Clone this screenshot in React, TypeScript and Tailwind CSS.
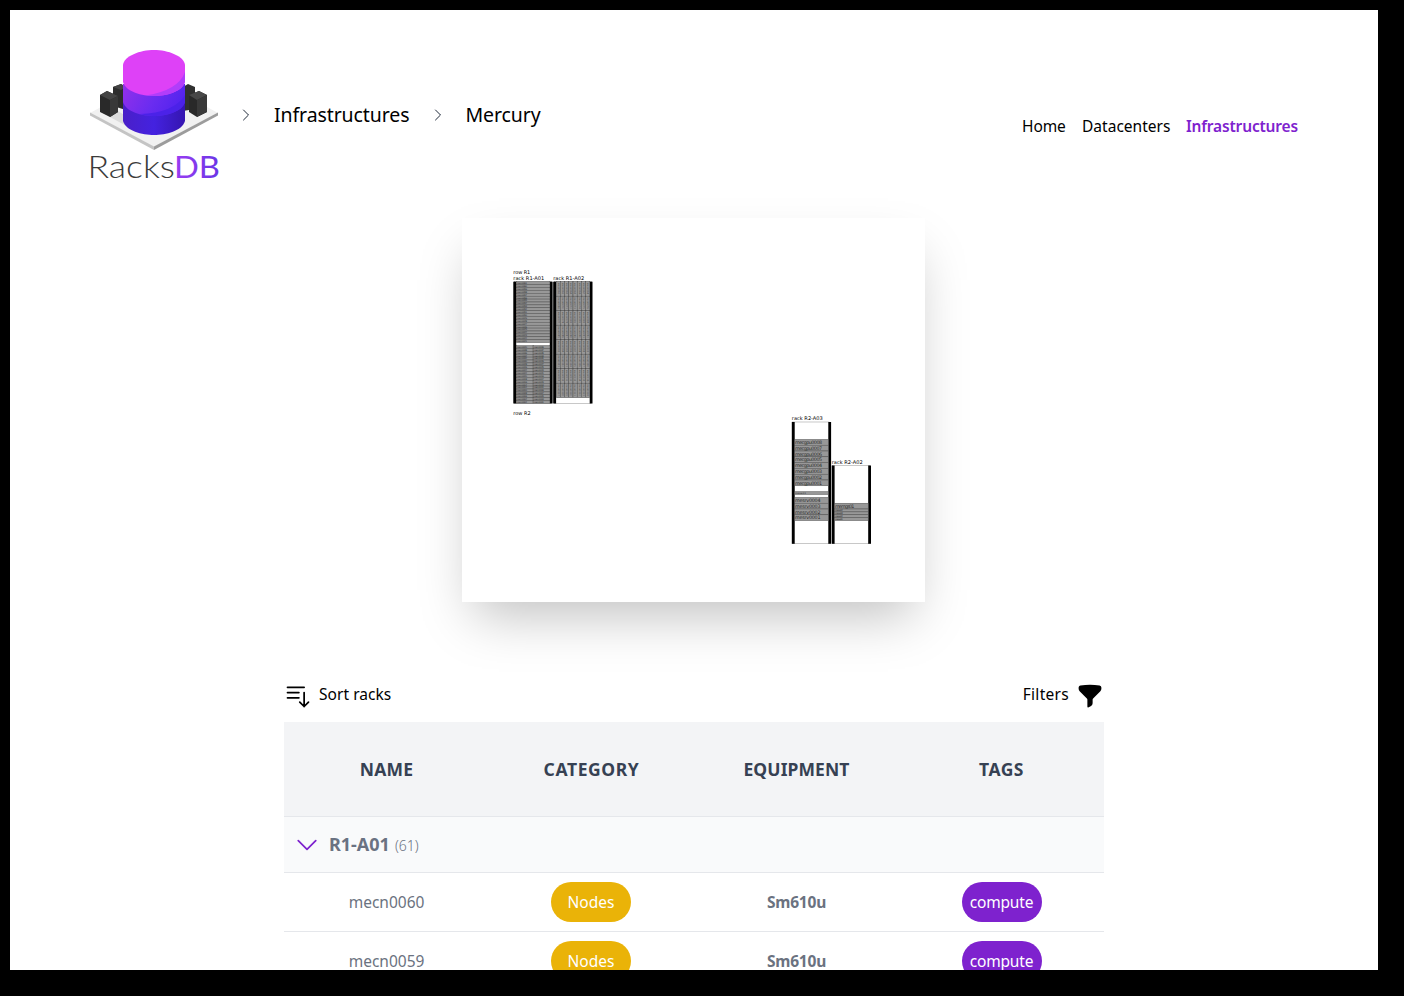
import React from "react";

const U = 2.9;

function Logo() {
  return (
    <svg viewBox="0 0 130 140" className="h-[140px] w-[130px] shrink-0 overflow-visible" role="img" aria-label="RacksDB">
      <defs>
        <linearGradient id="db" x1="0" y1="0" x2="1" y2="0">
          <stop offset="0" stopColor="#9a3df2" />
          <stop offset="1" stopColor="#6a35e6" />
        </linearGradient>
        <linearGradient id="mid" x1="0" y1="0" x2="1" y2="0.3">
          <stop offset="0" stopColor="#9330ea" />
          <stop offset="0.6" stopColor="#6a2cf0" />
          <stop offset="1" stopColor="#5524ee" />
        </linearGradient>
        <linearGradient id="low" x1="0" y1="0" x2="1" y2="0">
          <stop offset="0" stopColor="#4a1fc8" />
          <stop offset="0.5" stopColor="#4422e0" />
          <stop offset="1" stopColor="#3515b0" />
        </linearGradient>
      </defs>
      <path d="M0 63 64 28 128 63 64 97Z" fill="#f1f1f1" />
      <path d="M0 62.5 64 96.5V100L0 65.5Z" fill="#c4c4c4" />
      <path d="M128 62.5 64 96.5V100L128 65.5Z" fill="#9c9c9c" />
      <path d="M18 66 28 61 50 75 44 80Z" fill="#dcdcdc" />
      <path d="M23 37 31 34 36 37V60L23 56Z" fill="#2d2d2d" />
      <path d="M23 37 31 34 36 37 31 40Z" fill="#444" />
      <path d="M10 45 17 41 28 46V62L20 67 10 62Z" fill="#292929" />
      <path d="M10 45 17 41 28 46 20 50Z" fill="#444" />
      <path d="M20 50 28 46V62L20 67Z" fill="#383838" />
      <path d="M93 37 98 34 105 37V59L93 61Z" fill="#303030" />
      <path d="M99 45 109 41 117 45V62L107 67 99 62Z" fill="#292929" />
      <path d="M99 45 109 41 117 45 107 50Z" fill="#484848" />
      <path d="M107 50 117 45V62L107 67Z" fill="#393939" />
      <path d="M33 52H95V71C92 81 76 85 64 85S36 81 33 71Z" fill="url(#low)" />
      <path d="M33 34H95V52C92 62 76 66 64 66S36 62 33 52Z" fill="url(#mid)" />
      <path d="M50 64Q84 63 95 45V52C92 62 76 66 64 66Q56 66 50 64Z" fill="#4b22e8" />
      <path d="M33 15C34 6 50 0 64 0S94 6 95 15V32C92 42 76 46 64 46S36 42 33 32Z" fill="#de41f7" />
      <path d="M55 45.500Q88 41 95 22V32C92 42 76 46 64 46Q60 46 55 45.500Z" fill="#b13dfa" />
      <text x="-2.5" y="128" textLength="87.5" lengthAdjust="spacingAndGlyphs" fontSize="30.500" fontWeight="300" fill="#3b3b3b" className="font-['Lato']">Racks</text>
      <text x="84" y="128" textLength="46" lengthAdjust="spacingAndGlyphs" fontSize="30.500" fontWeight="400" fill="url(#db)" className="font-['Lato']">DB</text>
    </svg>
  );
}

function Icon({ d, className, width = 1.5 }: { d: string; className: string; width?: number }) {
  return (
    <svg viewBox="0 0 24 24" fill="none" stroke="currentColor" strokeWidth={width} strokeLinecap="round" strokeLinejoin="round" className={className}>
      <path d={d} />
    </svg>
  );
}

const chevronRight = "m8.25 4.5 7.5 7.5-7.5 7.5";
const chevronDown = "m19.5 8.25-7.5 7.5-7.5-7.5";
const barsArrowDown = "M3 4.5h14.25M3 9h9.75M3 13.5h9.75m4.5-4.5v12m0 0-3.75-3.75M17.25 21 21 17.25";

function Frame({ x, y, h, name }: { x: number; y: number; h: number; name: string }) {
  return (
    <g>
      <text x={x} y={y - 1.6} fontSize="5" textLength="31" lengthAdjust="spacingAndGlyphs" fill="#000">{name}</text>
      <rect x={x + 1} y={y} width="37" height={h} fill="#fff" stroke="#777" strokeWidth="0.4" />
      <rect x={x} y={y} width="2.9" height={h} />
      <rect x={x + 36.5} y={y} width="2.8" height={h} />
    </g>
  );
}

function Node({ x, y, w, h, label, size = 2.4, len }: { x: number; y: number; w: number; h: number; label?: string; size?: number; len?: number }) {
  return (
    <g>
      <rect x={x} y={y} width={w} height={h} fill="#989898" stroke="#444" strokeWidth="0.42" />
      {label && <text x={x + 0.3} y={y + h - (h > 4 ? 1.2 : 0.6)} fontSize={size} textLength={len} fill="#2c2c2c">{label}</text>}
    </g>
  );
}

const cn = (n: number) => "mecn" + String(n).padStart(4, "0");

function RackDiagram() {
  return (
    <svg viewBox="462 218 463 384" className="h-[384px] w-[463px] font-['DejaVu_Sans']">
      <text x="513.3" y="274.2" fontSize="5" textLength="17">row R1</text>
      <text x="513.3" y="414.6" fontSize="5" textLength="17.5">row R2</text>
      <Frame x={513.3} y={281.7} h={121.8} name="rack R1-A01" />
      <Frame x={553.2} y={281.7} h={121.8} name="rack R1-A02" />
      <Frame x={791.8} y={422} h={121.8} name="rack R2-A03" />
      <Frame x={831.7} y={465.5} h={78.3} name="rack R2-A02" />
      {Array.from({ length: 21 }, (_, i) => (
        <Node key={i} x={516.3} y={281.7 + i * U} w={33.6} h={U} label={cn(61 - i)} len={10.5} />
      ))}
      {Array.from({ length: 40 }, (_, i) => (
        <Node key={i} x={516.3 + (i % 2) * 16.8} y={345.5 + Math.floor(i / 2) * U} w={16.8} h={U} label={cn(40 - i)} len={10.5} />
      ))}
      {Array.from({ length: 64 }, (_, i) => {
        const x = 556.2 + (i % 8) * 4.2;
        const y = 281.7 + Math.floor(i / 8) * U * 5;
        return (
          <g key={i}>
            <rect x={x} y={y} width="4.2" height={U * 5} fill="#989898" stroke="#444" strokeWidth="0.45" />
            <text transform={`translate(${x + 1.4} ${y + 1}) rotate(90)`} fontSize="2.4" textLength="11.5" fill="#4a4a4a">{cn(61 + i)}</text>
          </g>
        );
      })}
      {Array.from({ length: 8 }, (_, i) => (
        <Node key={i} x={794.7} y={439.4 + i * U * 2} w={33.6} h={U * 2} label={`mecgpu000${8 - i}`} size={4.8} len={27} />
      ))}
      <Node x={794.7} y={491.6} w={33.6} h={U} label="mesw01" len={11} />
      {Array.from({ length: 4 }, (_, i) => (
        <Node key={i} x={794.7} y={497.4 + i * U * 2} w={33.6} h={U * 2} label={`mesrv000${4 - i}`} size={4.8} len={25.5} />
      ))}
      <Node x={834.6} y={503.2} w={33.6} h={U * 2} label="memgs01" size={4.8} len={19.5} />
      {Array.from({ length: 4 }, (_, i) => (
        <Node key={i} x={834.6} y={509 + i * U} w={33.6} h={U} label={`mesw0${4 - i}`} len={8} />
      ))}
    </svg>
  );
}

function Row({ name }: { name: string }) {
  return (
    <div className="grid h-[59px] grid-cols-4 items-center justify-items-center border-b border-gray-200 text-[15.5px] text-[#6b7280]">
      <span className="pt-0.5">{name}</span>
      <span className="mr-px flex h-10 w-20 items-center justify-center rounded-full bg-[#eab308] pt-px text-white">Nodes</span>
      <span className="pt-0.5 text-[15.5px] font-bold tracking-[-0.2px]">Sm610u</span>
      <span className="flex h-10 w-20 items-center justify-center rounded-full bg-[#7e22ce] pt-px tracking-[-0.2px] text-white">compute</span>
    </div>
  );
}

export default function App() {
  return (
    <div className="h-[996px] w-[1404px] overflow-hidden bg-black pt-[10px] pl-[10px] font-['Noto_Sans',sans-serif] text-black">
      <div className="h-[960px] w-[1368px] overflow-hidden bg-white">
        <header className="flex h-[208px] items-start justify-between pt-10 pr-20 pl-20">
          <div className="flex items-center">
            <Logo />
            <Icon d={chevronRight} className="mt-[-11px] ml-[18px] size-4 text-gray-800" />
            <span className="mt-[-11px] ml-5 w-[136px] text-[19.5px] tracking-[-0.1px] whitespace-nowrap">Infrastructures</span>
            <Icon d={chevronRight} className="mt-[-11px] ml-5 size-4 text-gray-800" />
            <span className="mt-[-11px] ml-[19.5px] text-[19.5px] tracking-[-0.1px]">Mercury</span>
          </div>
          <nav className="mt-16 flex text-[15.5px] leading-6 whitespace-nowrap">
            <span className="w-[60px] tracking-[-0.1px]">Home</span>
            <span className="w-[104px] tracking-[0.02px]">Datacenters</span>
            <span className="w-[112px] font-semibold tracking-[-0.17px] text-[#7e22ce]">Infrastructures</span>
          </nav>
        </header>
        <div className="ml-[452px] h-[384px] w-[463px] bg-white shadow-2xl">
          <RackDiagram />
        </div>
        <main className="ml-[274px] w-[820px] pt-[79px]">
          <div className="flex h-[41px] items-start justify-between text-[15.5px] leading-7">
            <div className="flex">
              <Icon d={barsArrowDown} className="mt-px size-7" />
              <span className="mt-[-1px] ml-[7px] tracking-[0.05px]">Sort racks</span>
            </div>
            <div className="flex">
              <span className="mt-[-1px] mr-[7px] tracking-[0.3px]">Filters</span>
              <svg viewBox="0 0 24 24" fill="currentColor" className="mt-px size-7">
                <path fillRule="evenodd" clipRule="evenodd" d="M3.792 2.938A49.069 49.069 0 0 1 12 2.25c2.797 0 5.54.236 8.209.688a1.857 1.857 0 0 1 1.541 1.836v1.044a3 3 0 0 1-.879 2.121l-6.182 6.182a1.5 1.5 0 0 0-.439 1.061v2.927a3 3 0 0 1-1.658 2.684l-1.757.878A.75.75 0 0 1 9.75 21v-5.818a1.5 1.5 0 0 0-.44-1.06L3.13 7.938a3 3 0 0 1-.879-2.121V4.774c0-.897.64-1.683 1.542-1.836Z" />
              </svg>
            </div>
          </div>
          <div className="grid h-[95px] grid-cols-4 items-center justify-items-center border-b border-gray-200 bg-gray-100 text-[17.5px] font-bold text-gray-700">
            <span className="tracking-[0.2px]">NAME</span>
            <span className="tracking-[0.6px]">CATEGORY</span>
            <span className="tracking-[0.1px]">EQUIPMENT</span>
            <span className="tracking-[0.5px]">TAGS</span>
          </div>
          <div className="flex h-14 items-center border-b border-gray-200 bg-gray-50 pl-[9px] text-gray-500">
            <Icon d={chevronDown} className="size-7 text-[#7e22ce]" />
            <span className="ml-2 text-[18px] font-bold">R1-A01</span>
            <span className="mt-0.5 ml-[5px] text-[14px] font-light">(61)</span>
          </div>
          <Row name="mecn0060" />
          <Row name="mecn0059" />
        </main>
      </div>
    </div>
  );
}
